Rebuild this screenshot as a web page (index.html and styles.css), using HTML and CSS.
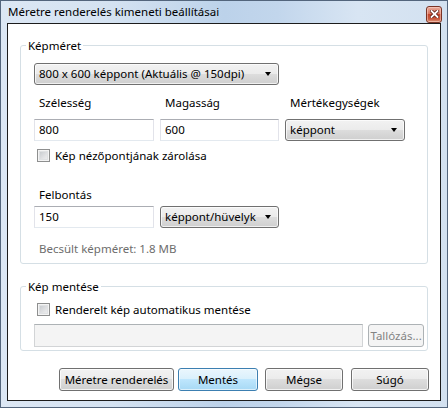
FILE: index.html
```html
<!DOCTYPE html>
<html lang="hu">
<head>
<meta charset="utf-8">
<title>Méretre renderelés kimeneti beállításai</title>
<link rel="stylesheet" href="styles.css">
</head>
<body>
<div class="window">
  <div class="titlebar">
    <span class="title">Méretre renderelés kimeneti beállításai</span>
    <span class="close" aria-label="Bezárás">
      <svg width="9" height="8" viewBox="0 0 9 8">
        <path d="M1.5 1 L7.5 7 M7.5 1 L1.5 7" stroke="#5a1a10" stroke-width="3.4" stroke-linecap="square"/>
        <path d="M1.5 1 L7.5 7 M7.5 1 L1.5 7" stroke="#ffffff" stroke-width="1.8" stroke-linecap="square"/>
      </svg>
    </span>
  </div>
  <div class="client">
    <fieldset class="group group-size">
      <legend>Képméret</legend>
      <div class="group-body">
        <div class="combo combo-preset"><span>800 x 600 képpont (Aktuális @ 150dpi)</span><i class="arrow"></i></div>
        <div class="dims">
          <div class="lbl">Szélesség</div>
          <div class="lbl">Magasság</div>
          <div class="lbl">Mértékegységek</div>
          <div class="textbox">800</div>
          <div class="textbox">600</div>
          <div class="combo"><span>képpont</span><i class="arrow"></i></div>
        </div>
        <div class="check-row lock-row"><span class="checkbox"></span><span>Kép nézőpontjának zárolása</span></div>
        <div class="lbl res-label">Felbontás</div>
        <div class="res-row">
          <div class="textbox">150</div>
          <div class="combo"><span>képpont/hüvelyk</span><i class="arrow"></i></div>
        </div>
        <div class="estimate">Becsült képméret: 1.8 MB</div>
      </div>
    </fieldset>
    <fieldset class="group group-save">
      <legend>Kép mentése</legend>
      <div class="group-body save-body">
        <div class="check-row"><span class="checkbox"></span><span>Renderelt kép automatikus mentése</span></div>
        <div class="path-row">
          <div class="textbox disabled path"></div>
          <div class="btn disabled browse">Tallózás...</div>
        </div>
      </div>
    </fieldset>
    <div class="buttons">
      <div class="btn btn-render">Méretre renderelés</div>
      <div class="btn btn-default btn-save">Mentés</div>
      <div class="btn btn-cancel">Mégse</div>
      <div class="btn btn-help">Súgó</div>
    </div>
  </div>
</div>
</body>
</html>
```

FILE: styles.css
```css
* { box-sizing: border-box; }
html, body { margin: 0; padding: 0; }
body {
  width: 448px;
  height: 408px;
  overflow: hidden;
  background: #ffffff;
  font-family: "Noto Sans", "Open Sans", sans-serif;
  font-size: 11.5px;
  color: #000;
}
.window {
  width: 448px;
  height: 408px;
  border: 1px solid #53657c;
  padding: 0 6px 6px 6px;
  display: flex;
  flex-direction: column;
  background:
    linear-gradient(90deg, #dce7f4 0%, #d4e2f1 25%, #bcd2ea 50%, #c2d6ec 62%, #d8e5f3 80%, #d3e1f0 100%);
}
.titlebar {
  height: 22px;
  display: flex;
  align-items: center;
  padding-left: 1px;
}
.title {
  font-size: 11.5px;
  line-height: 16px;
  color: #000;
}
.close {
  margin-left: auto;
  margin-right: -1px;
  margin-top: 4px;
  width: 16px;
  height: 17px;
  border: 1px solid #7a3426;
  border-radius: 3px;
  background: linear-gradient(#e9ab9b 0%, #d9765f 45%, #c4452b 50%, #c85a3e 80%, #e09a7f 100%);
  box-shadow: inset 0 0 0 1px rgba(255,220,210,0.5);
  display: flex;
  align-items: center;
  justify-content: center;
}
.close svg { display: block; }
.client {
  flex: 1;
  background: #ffffff;
  border: 1px solid #1c1c1c;
  padding: 0 12px;
  display: flex;
  flex-direction: column;
}
.group {
  margin: 14px 0 0 0;
  padding: 0;
  border: 1px solid #d5dfe5;
  border-radius: 3px;
  min-width: 0;
}
.group legend {
  margin-left: 5px;
  padding: 0 2px;
  line-height: 15px;
  font-size: 11.5px;
}
.group-body {
  padding: 10px 12px 7px 13px;
}
.group-save { margin-top: 15px; }
.save-body { padding: 8px 3px 3px 13px; }

.combo {
  height: 22px;
  border: 1px solid #707070;
  border-radius: 3px;
  background: linear-gradient(#f2f2f2 0%, #ebebeb 50%, #dddddd 50%, #cfcfcf 100%);
  box-shadow: inset 0 0 0 1px rgba(255,255,255,0.7);
  display: flex;
  align-items: center;
  padding: 0 7px 0 4px;
  line-height: 16px;
}
.combo span { flex: 1; white-space: nowrap; overflow: hidden; }
.arrow {
  width: 0;
  height: 0;
  border-left: 3.5px solid transparent;
  border-right: 3.5px solid transparent;
  border-top: 4px solid #000;
}
.combo-preset { width: 245px; }

.lbl {
  line-height: 15px;
  padding-left: 5px;
}
.dims {
  display: grid;
  grid-template-columns: 120px 119px 120px;
  column-gap: 6px;
  row-gap: 9px;
  margin-top: 10px;
}
.textbox {
  height: 22px;
  border: 1px solid #dbdfe6;
  border-top-color: #abadb3;
  border-left-color: #e2e3ea;
  border-right-color: #e2e3ea;
  border-bottom-color: #e3e9ef;
  background: #fff;
  padding-left: 4px;
  line-height: 20px;
}
.check-row {
  display: flex;
  align-items: center;
  height: 15px;
  line-height: 15px;
}
.lock-row { margin-top: 7px; }
.checkbox {
  width: 13px;
  height: 13px;
  margin-left: 3px;
  margin-right: 5px;
  border: 1px solid #8e8f8f;
  background: linear-gradient(135deg, #bfc3c8 0%, #e2e3e5 60%, #f3f3f3 100%);
  box-shadow: inset 0 0 0 1px #f4f4f4, inset 0 0 0 2px #dfe1e3;
  flex: none;
}
.res-label { margin-top: 24px; }
.res-row {
  display: flex;
  gap: 6px;
  margin-top: 4px;
}
.res-row .textbox { width: 120px; }
.res-row .combo { width: 119px; }
.estimate {
  margin-top: 13px;
  line-height: 15px;
  padding-left: 5px;
  color: #6d6d6d;
}

.path-row {
  display: flex;
  gap: 5px;
  margin-top: 7px;
  height: 23px;
}
.textbox.disabled {
  background: #f4f4f4;
  border-color: #d2d4d6;
  border-top-color: #adb2b5;
}
.path { width: 330px; height: 23px; }

.btn {
  height: 23px;
  border: 1px solid #707070;
  border-radius: 3px;
  background: linear-gradient(#f2f2f2 0%, #ebebeb 50%, #dddddd 50%, #cfcfcf 100%);
  box-shadow: inset 0 0 0 1px rgba(255,255,255,0.75);
  display: flex;
  align-items: center;
  justify-content: center;
  line-height: 16px;
  white-space: nowrap;
}
.btn.disabled {
  border-color: #adb2b5;
  background: #f4f4f4;
  box-shadow: none;
  color: #838383;
}
.browse { width: 56px; }
.btn-default {
  border-color: #3c7fb1;
  background: linear-gradient(#eaf6fd 0%, #d9f0fc 50%, #bee6fd 50%, #a7d9f5 100%);
  box-shadow: inset 0 0 0 1px rgba(255,255,255,0.6);
}
.buttons {
  display: flex;
  justify-content: flex-end;
  margin-top: 17px;
  margin-right: -1px;
}
.btn-render { width: 115px; }
.btn-save { width: 80px; margin-left: 4px; }
.btn-cancel { width: 78px; margin-left: 7px; }
.btn-help { width: 78px; margin-left: 8px; }
```
